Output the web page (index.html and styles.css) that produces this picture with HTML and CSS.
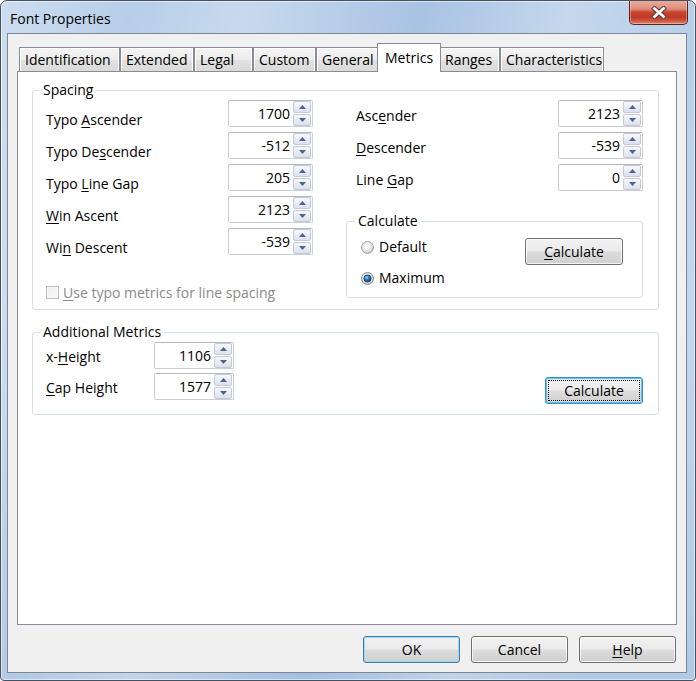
FILE: index.html
```html
<!DOCTYPE html>
<html lang="en">
<head>
<meta charset="utf-8">
<title>Font Properties</title>
<link rel="stylesheet" href="styles.css">
</head>
<body>
<div class="window">
  <div class="titlebar">
    <span class="title">Font Properties</span>
    <button class="close" type="button" aria-label="Close">
      <svg width="16" height="13" viewBox="0 0 16 13">
        <path d="M3.5 2.5 L12.5 10.5 M12.5 2.5 L3.5 10.5" stroke="#5a3a3a" stroke-width="4.8" stroke-linecap="square" fill="none"/>
        <path d="M3.5 2.5 L12.5 10.5 M12.5 2.5 L3.5 10.5" stroke="#ffffff" stroke-width="2.8" stroke-linecap="square" fill="none"/>
      </svg>
    </button>
  </div>
  <div class="client">
    <div class="tabs">
      <div class="tab tab-ident">Identification</div>
      <div class="tab tab-ext">Extended</div>
      <div class="tab tab-legal">Legal</div>
      <div class="tab tab-custom">Custom</div>
      <div class="tab tab-general">General</div>
      <div class="tab tab-metrics active">Metrics</div>
      <div class="tab tab-ranges">Ranges</div>
      <div class="tab tab-chars">Characteristics</div>
    </div>
    <div class="panel">
      <fieldset class="group spacing">
        <legend>Spacing</legend>
        <div class="spacing-cols">
          <div class="col">
            <div class="fields fields-left">
              <label>Typo <u>A</u>scender</label>
              <div class="spin"><span class="spin-val">1700</span><span class="spin-btns"><span class="sb"><svg width="7" height="4" viewBox="0 0 7 4"><path d="M0 4 L3.5 0 L7 4 Z" fill="#4d628f"/></svg></span><span class="sb"><svg width="7" height="4" viewBox="0 0 7 4"><path d="M0 0 L7 0 L3.5 4 Z" fill="#4d628f"/></svg></span></span></div>
              <label>Typo De<u>s</u>cender</label>
              <div class="spin"><span class="spin-val">-512</span><span class="spin-btns"><span class="sb"><svg width="7" height="4" viewBox="0 0 7 4"><path d="M0 4 L3.5 0 L7 4 Z" fill="#4d628f"/></svg></span><span class="sb"><svg width="7" height="4" viewBox="0 0 7 4"><path d="M0 0 L7 0 L3.5 4 Z" fill="#4d628f"/></svg></span></span></div>
              <label>Typo <u>L</u>ine Gap</label>
              <div class="spin"><span class="spin-val">205</span><span class="spin-btns"><span class="sb"><svg width="7" height="4" viewBox="0 0 7 4"><path d="M0 4 L3.5 0 L7 4 Z" fill="#4d628f"/></svg></span><span class="sb"><svg width="7" height="4" viewBox="0 0 7 4"><path d="M0 0 L7 0 L3.5 4 Z" fill="#4d628f"/></svg></span></span></div>
              <label><u>W</u>in Ascent</label>
              <div class="spin"><span class="spin-val">2123</span><span class="spin-btns"><span class="sb"><svg width="7" height="4" viewBox="0 0 7 4"><path d="M0 4 L3.5 0 L7 4 Z" fill="#4d628f"/></svg></span><span class="sb"><svg width="7" height="4" viewBox="0 0 7 4"><path d="M0 0 L7 0 L3.5 4 Z" fill="#4d628f"/></svg></span></span></div>
              <label>Wi<u>n</u> Descent</label>
              <div class="spin"><span class="spin-val">-539</span><span class="spin-btns"><span class="sb"><svg width="7" height="4" viewBox="0 0 7 4"><path d="M0 4 L3.5 0 L7 4 Z" fill="#4d628f"/></svg></span><span class="sb"><svg width="7" height="4" viewBox="0 0 7 4"><path d="M0 0 L7 0 L3.5 4 Z" fill="#4d628f"/></svg></span></span></div>
            </div>
            <div class="check disabled">
              <span class="checkbox"></span>
              <span><u>U</u>se typo metrics for line spacing</span>
            </div>
          </div>
          <div class="col">
            <div class="fields fields-right">
              <label>Asc<u>e</u>nder</label>
              <div class="spin"><span class="spin-val">2123</span><span class="spin-btns"><span class="sb"><svg width="7" height="4" viewBox="0 0 7 4"><path d="M0 4 L3.5 0 L7 4 Z" fill="#4d628f"/></svg></span><span class="sb"><svg width="7" height="4" viewBox="0 0 7 4"><path d="M0 0 L7 0 L3.5 4 Z" fill="#4d628f"/></svg></span></span></div>
              <label><u>D</u>escender</label>
              <div class="spin"><span class="spin-val">-539</span><span class="spin-btns"><span class="sb"><svg width="7" height="4" viewBox="0 0 7 4"><path d="M0 4 L3.5 0 L7 4 Z" fill="#4d628f"/></svg></span><span class="sb"><svg width="7" height="4" viewBox="0 0 7 4"><path d="M0 0 L7 0 L3.5 4 Z" fill="#4d628f"/></svg></span></span></div>
              <label>Line <u>G</u>ap</label>
              <div class="spin"><span class="spin-val">0</span><span class="spin-btns"><span class="sb"><svg width="7" height="4" viewBox="0 0 7 4"><path d="M0 4 L3.5 0 L7 4 Z" fill="#4d628f"/></svg></span><span class="sb"><svg width="7" height="4" viewBox="0 0 7 4"><path d="M0 0 L7 0 L3.5 4 Z" fill="#4d628f"/></svg></span></span></div>
            </div>
            <fieldset class="group calc">
              <legend>Calculate</legend>
              <div class="calc-body">
                <div class="radios">
                  <div class="radio">
                    <svg width="13" height="13" viewBox="0 0 13 13">
                      <defs>
                        <radialGradient id="rOff" cx="45%" cy="40%" r="60%">
                          <stop offset="0" stop-color="#ffffff"/>
                          <stop offset="0.6" stop-color="#e6e6e6"/>
                          <stop offset="1" stop-color="#c4c4c4"/>
                        </radialGradient>
                      </defs>
                      <circle cx="6.5" cy="6.5" r="6" fill="url(#rOff)" stroke="#a3a3a3"/>
                    </svg>
                    <span>Default</span>
                  </div>
                  <div class="radio">
                    <svg width="13" height="13" viewBox="0 0 13 13">
                      <defs>
                        <radialGradient id="rOn" cx="40%" cy="35%" r="65%">
                          <stop offset="0" stop-color="#9fdcff"/>
                          <stop offset="0.45" stop-color="#2a7dc0"/>
                          <stop offset="1" stop-color="#0b3f73"/>
                        </radialGradient>
                      </defs>
                      <circle cx="6.5" cy="6.5" r="6" fill="url(#rOff)" stroke="#8a8a8a"/>
                      <circle cx="6.5" cy="6.5" r="3.6" fill="url(#rOn)" stroke="#1c3f64" stroke-width="0.8"/>
                    </svg>
                    <span>Maximum</span>
                  </div>
                </div>
                <button class="btn calc-btn" type="button"><u>C</u>alculate</button>
              </div>
            </fieldset>
          </div>
        </div>
      </fieldset>

      <fieldset class="group additional">
        <legend>Additional Metrics</legend>
        <div class="add-body">
          <div class="fields fields-add">
            <label>x-<u>H</u>eight</label>
            <div class="spin"><span class="spin-val">1106</span><span class="spin-btns"><span class="sb"><svg width="7" height="4" viewBox="0 0 7 4"><path d="M0 4 L3.5 0 L7 4 Z" fill="#4d628f"/></svg></span><span class="sb"><svg width="7" height="4" viewBox="0 0 7 4"><path d="M0 0 L7 0 L3.5 4 Z" fill="#4d628f"/></svg></span></span></div>
            <label><u>C</u>ap Height</label>
            <div class="spin"><span class="spin-val">1577</span><span class="spin-btns"><span class="sb"><svg width="7" height="4" viewBox="0 0 7 4"><path d="M0 4 L3.5 0 L7 4 Z" fill="#4d628f"/></svg></span><span class="sb"><svg width="7" height="4" viewBox="0 0 7 4"><path d="M0 0 L7 0 L3.5 4 Z" fill="#4d628f"/></svg></span></span></div>
          </div>
          <button class="btn btn-focus add-btn" type="button">Calculate</button>
        </div>
      </fieldset>
    </div>
    <div class="buttons">
      <button class="btn btn-default" type="button">OK</button>
      <button class="btn" type="button">Cancel</button>
      <button class="btn" type="button"><u>H</u>elp</button>
    </div>
  </div>
</div>
</body>
</html>
```

FILE: styles.css
```css
* { box-sizing: border-box; }

html, body {
  margin: 0;
  padding: 0;
}

body {
  width: 696px;
  height: 681px;
  overflow: hidden;
  background: #ffffff;
  font-family: "Open Sans", "Noto Sans", sans-serif;
  font-size: 14px;
  line-height: 20px;
  color: #000;
}

u {
  text-decoration: underline;
  text-decoration-thickness: 1px;
  text-underline-offset: 2px;
}

/* ---------- window frame ---------- */
.window {
  width: 696px;
  height: 681px;
  border: 1px solid #47525e;
  border-radius: 7px 7px 4px 4px;
  display: flex;
  flex-direction: column;
  background:
    linear-gradient(100deg, rgba(255,255,255,0.30) 0%, rgba(255,255,255,0) 16%, rgba(255,255,255,0.22) 30%, rgba(110,150,205,0.20) 52%, rgba(255,255,255,0.18) 70%, rgba(255,255,255,0) 86%),
    linear-gradient(to bottom, #b7cee9 0%, #c3d7ee 45%, #b2c9e5 100%);
  box-shadow: inset 0 0 0 1px rgba(255,255,255,0.55);
  overflow: hidden;
}

.titlebar {
  height: 32px;
  flex: none;
  display: flex;
  align-items: flex-start;
  justify-content: space-between;
  padding-left: 9px;
}

.title {
  margin-top: 8px;
  color: #000;
}

.close {
  margin-top: -1px;
  margin-right: 7px;
  width: 59px;
  height: 25px;
  padding: 0;
  border: 1px solid #5e2219;
  border-top: none;
  border-radius: 0 0 5px 5px;
  background: linear-gradient(to bottom, #eab0a2 0%, #dd8c78 38%, #c8452f 50%, #c03a26 72%, #cf5a43 88%, #e2876f 100%);
  box-shadow: inset 0 0 0 1px rgba(255,255,255,0.35);
  display: flex;
  align-items: center;
  justify-content: center;
}

.client {
  flex: 1;
  margin: 0 8px 7px 6px;
  border: 1px solid #7b8797;
  background: #f0f0f0;
  display: flex;
  flex-direction: column;
}

/* ---------- tabs ---------- */
.tabs {
  flex: none;
  height: 28px;
  margin: 9px 9px 0 9px;
  padding-left: 2px;
  display: flex;
  align-items: flex-end;
}

.tab {
  height: 24px;
  padding: 2px 0 0 5px;
  border: 1px solid #898c95;
  border-bottom: none;
  background: linear-gradient(to bottom, #f4f4f4 0%, #ececec 50%, #e2e2e2 51%, #dadada 100%);
  box-shadow: inset 1px 1px 0 #ffffff, inset -1px 0 0 #ffffff;
  white-space: nowrap;
  color: #000;
}

.tab-ident { width: 101px; }
.tab-ext { width: 74px; }
.tab-legal { width: 59px; }
.tab-custom { width: 63px; }
.tab-general { width: 63px; }
.tab-ranges { width: 61px; }
.tab-chars { width: 104px; }

.tab.active {
  width: 64px;
  height: 29px;
  margin: 0 -2px -1px -2px;
  padding: 4px 0 0 7px;
  background: #ffffff;
  box-shadow: none;
  position: relative;
  z-index: 1;
}

.panel {
  flex: 1;
  margin: 0 9px;
  border: 1px solid #898c95;
  background: #ffffff;
}

/* ---------- group boxes ---------- */
.group {
  margin: 0;
  padding: 0;
  min-width: 0;
  border: 1px solid #d5dfe5;
  border-radius: 3px;
}

.group > legend {
  margin-left: 7px;
  padding: 0 3px;
  line-height: 20px;
}

.spacing {
  margin: 8px 17px 0 14px;
}

.spacing-cols {
  display: grid;
  grid-template-columns: 267px 297px;
  column-gap: 33px;
  align-items: start;
  padding: 0 0 6px 13px;
}

.fields {
  display: grid;
  grid-auto-rows: 27px;
  row-gap: 5px;
}

.fields-left,
.fields-right {
  grid-template-columns: 1fr 85px;
}

.fields-left label {
  padding-top: 10px;
}

.fields-right label {
  padding-top: 6px;
  padding-left: 10px;
}

.fields-add {
  grid-template-columns: 108px 80px;
  row-gap: 4px;
}

.fields-add label {
  padding-top: 5px;
}

label {
  white-space: nowrap;
}

/* ---------- spin box ---------- */
.spin {
  display: flex;
  height: 27px;
  background: #ffffff;
  border: 1px solid #c9ced6;
  border-top-color: #b4b9c1;
  border-radius: 2px;
}

.spin-val {
  flex: 1;
  text-align: right;
  padding-right: 3px;
  line-height: 25px;
}

.spin-btns {
  width: 18px;
  margin-right: 1px;
  display: flex;
  flex-direction: column;
  gap: 1px;
}

.sb {
  flex: 1;
  display: flex;
  align-items: center;
  justify-content: center;
  border: 1px solid #c3cbd8;
  border-radius: 2px;
  background: linear-gradient(to bottom, #f6f8fb 0%, #e9edf3 50%, #dbe2ec 100%);
}

/* ---------- checkbox ---------- */
.check {
  margin-top: 28px;
  display: flex;
  align-items: flex-start;
  gap: 4px;
}

.check.disabled {
  color: #8a8a8a;
}

.checkbox {
  width: 13px;
  height: 13px;
  margin-top: 3px;
  border: 1px solid #bdbdbd;
  background: linear-gradient(135deg, #ececec, #fbfbfb);
  box-shadow: inset 0 0 0 1px #f7f7f7;
}

/* ---------- calculate group ---------- */
.calc {
  margin-top: 20px;
}

.calc > legend {
  margin-left: 8px;
}

.calc-body {
  display: flex;
  justify-content: space-between;
  align-items: flex-start;
  padding: 0 19px 9px 14px;
}

.radios {
  display: flex;
  flex-direction: column;
  gap: 11px;
  padding-top: 6px;
}

.radio {
  display: flex;
  align-items: center;
  gap: 5px;
}

.radio svg {
  display: block;
  flex: none;
}

/* ---------- buttons ---------- */
.btn {
  width: 97px;
  height: 27px;
  padding: 0;
  font: inherit;
  line-height: 25px;
  color: #000;
  text-align: center;
  border: 1px solid #707070;
  border-radius: 3px;
  background: linear-gradient(to bottom, #f2f2f2 0%, #ebebeb 48%, #dddddd 52%, #cfcfcf 100%);
  box-shadow: inset 0 0 0 1px rgba(255,255,255,0.75);
}

.calc-btn {
  width: 98px;
  margin-top: 7px;
}

.btn-default {
  border-color: #3c7fb1;
  box-shadow: inset 0 0 0 1px #9fd6f2;
}

.btn-focus {
  border-color: #3c8fc4;
  box-shadow: inset 0 0 0 1px #5cc2ee;
  outline: 1px dotted #000;
  outline-offset: -4px;
}

.additional {
  margin: 12px 17px 0 14px;
}

.add-body {
  display: flex;
  justify-content: space-between;
  align-items: flex-start;
  padding: 0 15px 10px 13px;
}

.add-btn {
  width: 98px;
  margin-top: 35px;
}

.buttons {
  flex: none;
  display: flex;
  justify-content: flex-end;
  gap: 11px;
  margin: 11px 10px 9px 0;
}
```
